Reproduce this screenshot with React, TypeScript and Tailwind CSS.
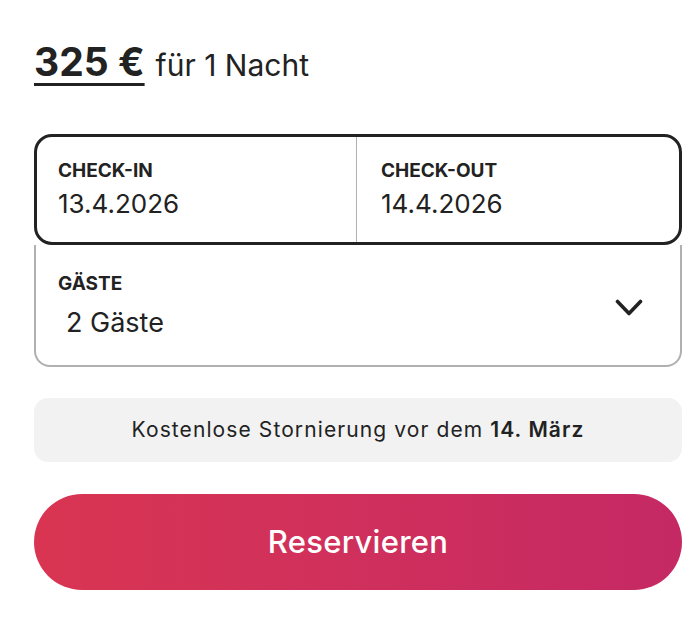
export default function App() {
  return (
    <div className="h-[618px] w-[698px] bg-white pl-[34px] pr-[16px] pt-[39px] font-['Inter',sans-serif] text-[#222222]">
      <div className="flex h-[46px] items-baseline gap-[11px] leading-[46px]">
        <span className="text-[39px] font-bold underline decoration-[3px] underline-offset-[7px]">
          325 €
        </span>
        <span className="text-[30px] font-normal">für 1 Nacht</span>
      </div>

      <div className="mt-[49px] flex flex-col">
        <div className="flex h-[111px] rounded-[18px] border-[3px] border-[#222222]">
          <div className="flex-1 border-r border-[#b0b0b0] pl-[21px] pt-[24px]">
            <div className="text-[19px] font-bold leading-[20px]">CHECK-IN</div>
            <div className="mt-[8px] text-[26px] leading-[30px]">13.4.2026</div>
          </div>
          <div className="flex-1 pl-[24px] pt-[24px]">
            <div className="text-[19px] font-bold leading-[20px]">CHECK-OUT</div>
            <div className="mt-[8px] text-[26px] leading-[30px]">14.4.2026</div>
          </div>
        </div>
        <div className="flex h-[122px] items-center rounded-b-[16px] border-x-2 border-b-2 border-[#b0b0b0] pl-[22px] pr-[37px]">
          <div className="flex-1 pt-[3px]">
            <div className="text-[19px] font-bold leading-[20px]">GÄSTE</div>
            <div className="mt-[13px] pl-[8px] text-[27px] leading-[32px]">2 Gäste</div>
          </div>
          <svg
            viewBox="0 0 28 17"
            className="mt-[4px] h-[17px] w-[28px]"
            fill="none"
            stroke="#222222"
            strokeWidth="3.6"
            strokeLinecap="round"
            strokeLinejoin="round"
          >
            <path d="M2.5 2.5l11.5 12 11.5-12" />
          </svg>
        </div>
      </div>

      <div className="mt-[31px] flex h-[64px] items-center justify-center rounded-[14px] bg-[#f2f2f2] text-[21px] tracking-[1.1px]">
        Kostenlose Stornierung vor dem&nbsp;<span className="font-semibold">14. März</span>
      </div>

      <button
        type="button"
        className="mt-[32px] flex h-[96px] w-full items-center justify-center rounded-full bg-linear-to-r from-[#d93552] to-[#c52964] text-[31px] font-medium tracking-[0.3px] text-white"
      >
        Reservieren
      </button>
    </div>
  );
}
